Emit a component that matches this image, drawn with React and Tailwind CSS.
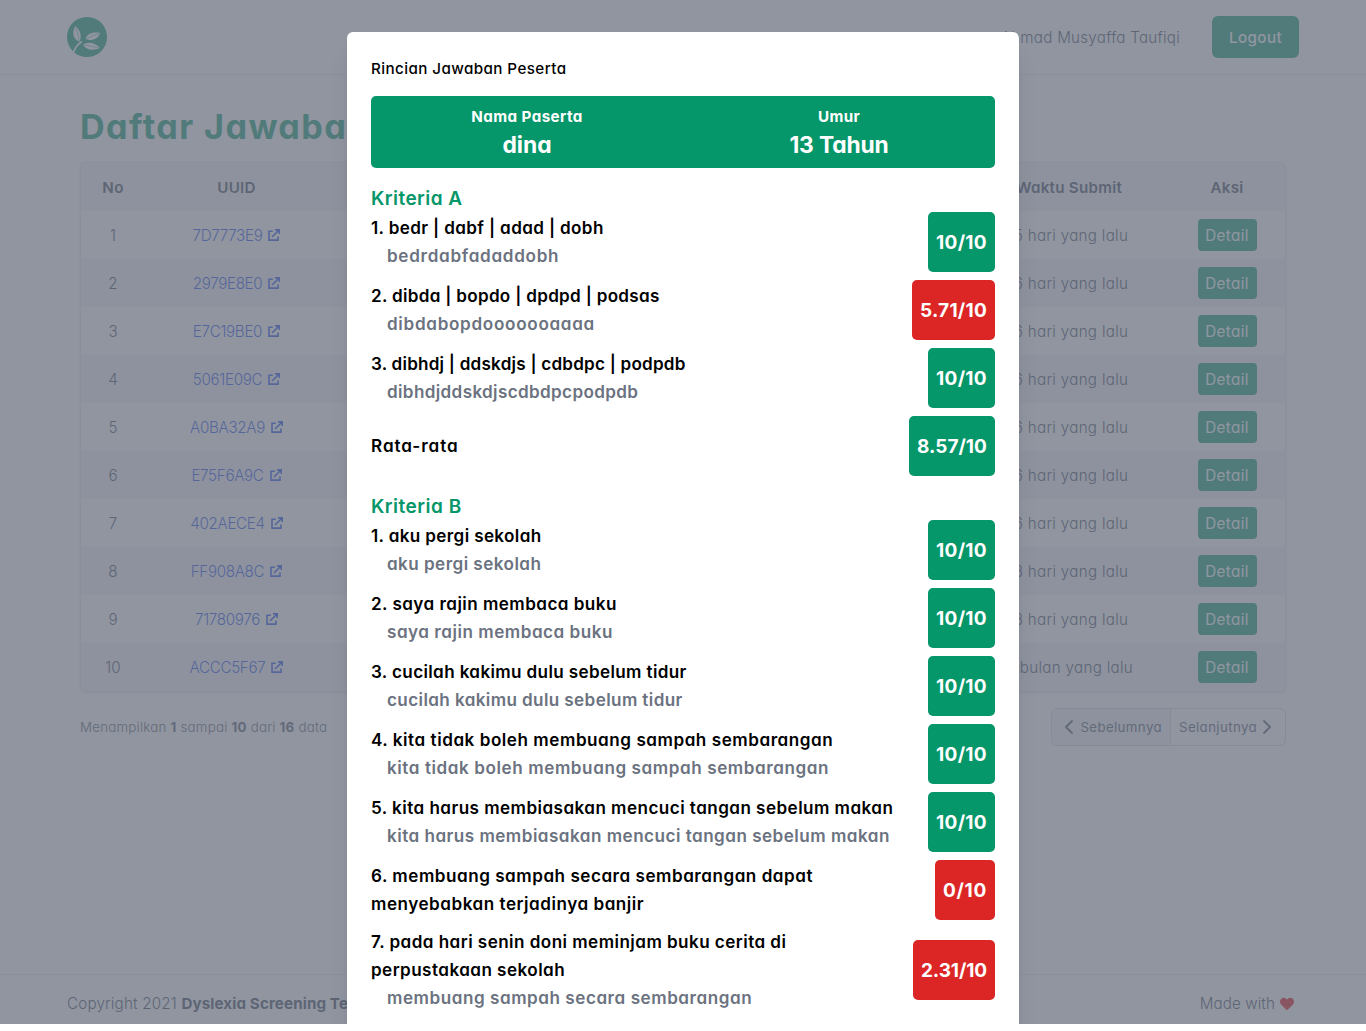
import React from "react";
import { FaHeart } from "react-icons/fa";

const rows = [
  ["7D7773E9", "5 hari yang lalu"],
  ["2979E8E0", "6 hari yang lalu"],
  ["E7C19BE0", "6 hari yang lalu"],
  ["5061E09C", "6 hari yang lalu"],
  ["A0BA32A9", "6 hari yang lalu"],
  ["E75F6A9C", "6 hari yang lalu"],
  ["402AECE4", "6 hari yang lalu"],
  ["FF908A8C", "8 hari yang lalu"],
  ["71780976", "8 hari yang lalu"],
  ["ACCC5F67", "1 bulan yang lalu"],
];

const tight = "tracking-[0.22px]";
const snug = "tracking-[0.36px]";
const normal = "tracking-[0.45px]";
const wide = "tracking-[0.52px]";
const wider = "tracking-[0.7px]";

const criteriaA = [
  ["bedr | dabf | adad | dobh", "bedrdabfadaddobh", "10", true, "tracking-[0.36px]", wider],
  ["dibda | bopdo | dpdpd | podsas", "dibdabopdooooooaaaa", "5.71", false, "tracking-[0.3px]", wider],
  ["dibhdj | ddskdjs | cdbdpc | podpdb", "dibhdjddskdjscdbdpcpodpdb", "10", true, tight, snug],
];

const criteriaB = [
  ["aku pergi sekolah", "aku pergi sekolah", "10", true, snug, normal],
  ["saya rajin membaca buku", "saya rajin membaca buku", "10", true, normal, wide],
  ["cucilah kakimu dulu sebelum tidur", "cucilah kakimu dulu sebelum tidur", "10", true, snug, "tracking-[0.39px]"],
  ["kita tidak boleh membuang sampah sembarangan", "kita tidak boleh membuang sampah sembarangan", "10", true, "tracking-[0.54px]", "tracking-[0.58px]"],
  ["kita harus membiasakan mencuci tangan sebelum makan", "kita harus membiasakan mencuci tangan sebelum makan", "10", true, normal, "tracking-[0.48px]"],
  ["membuang sampah secara sembarangan dapat menyebabkan terjadinya banjir", "", "0", false, wide, normal],
  ["pada hari senin doni meminjam buku cerita di perpustakaan sekolah", "membuang sampah secara sembarangan", "2.31", false, normal, "tracking-[0.54px]"],
];

const scoreSizes = {
  "10": "w-[67px] tracking-[0.29px]",
  "0": "w-[60px] tracking-[0.7px]",
  "5.71": "w-[83px] tracking-[0.26px]",
  "2.31": "w-[82px] tracking-[-0.1px]",
  "8.57": "w-[86px] tracking-[0px]",
};

function Logo() {
  return (
    <svg viewBox="0 0 40 40" className="size-10">
      <circle cx="20" cy="20" r="20" fill="#059669" />
      <g fill="#fff">
        <path d="M8.2 9C5 15.500 5.500 21.500 12.300 24.800C15.200 19.500 13.500 13 8.200 9Z" />
        <path d="M18.500 22C20 16.500 26 14.500 33.500 16C30.500 22 25 24.500 18.500 22Z" />
        <path d="M16 28C20 24.500 27 25 33 31C26.500 34 19 33 16 28Z" />
      </g>
      <path d="M6.500 35C8 31 11 27 15 24.500" fill="none" stroke="#fff" strokeWidth="1.700" />
      <path d="M8.700 10.500C10.500 15 11.500 19 12 24M19 22C23 20 27 18 33 16.300M17 28C22 28.500 27 30 32 31" fill="none" stroke="#059669" strokeWidth="0.500" />
    </svg>
  );
}

function ExternalLink() {
  return (
    <svg viewBox="0 0 12 12" className="size-3" fill="none" stroke="currentColor" strokeWidth="1.6">
      <path d="M4.8 2.2H1v8.900h9V7.400M4 8l6.800-6.800M7 .9h4.200v4.200" />
    </svg>
  );
}

function Chevron({ right }) {
  return (
    <svg viewBox="0 0 8 14" className="h-3.5 w-2" fill="none" stroke="currentColor" strokeWidth="1.8" strokeLinecap="round" strokeLinejoin="round">
      <path d={right ? "M1 1l6 6-6 6" : "M7 1L1 7l6 6"} />
    </svg>
  );
}

function Score({ value, pass }) {
  return (
    <div className={`h-[60px] shrink-0 rounded-[5px] pt-px text-center text-[19px] leading-[60px] font-bold text-white ${scoreSizes[value]} ${pass ? "bg-[#059669]" : "bg-[#dc2626]"}`}>
      {`${value}/10`}
    </div>
  );
}

function Answer({ number, item }) {
  const [question, answer, score, pass, questionTracking, answerTracking] = item;
  return (
    <div className="flex items-center justify-between text-[17.1px] leading-7 font-[590]">
      <div className="max-w-[530px]">
        <p className={`text-black ${questionTracking}`}>{`${number}. ${question}`}</p>
        {answer && <p className={`pl-4 text-[#6b7280] ${answerTracking}`}>{answer}</p>}
      </div>
      <Score value={score} pass={pass} />
    </div>
  );
}

function Modal() {
  return (
    <div className="absolute top-8 left-[347px] w-2xl rounded-md bg-white p-6 shadow-xl">
      <h3 className="h-6 pt-px text-[15.2px] leading-6 font-medium tracking-[0.41px] text-black">Rincian Jawaban Peserta</h3>
      <div className="mt-4 grid h-[72px] grid-cols-2 rounded-[5px] bg-[#059669] pt-[9px] text-center font-bold text-white">
        <div>
          <p className="text-[15.2px] leading-6 font-[650] tracking-[0.42px]">Nama Paserta</p>
          <p className="text-[22.8px] leading-8">dina</p>
        </div>
        <div>
          <p className="text-[15.2px] leading-6 font-[650] tracking-[0.38px]">Umur</p>
          <p className="text-[22.8px] leading-8 tracking-[-0.14px]">13 Tahun</p>
        </div>
      </div>
      <h4 className="mt-4 h-7 pt-px text-[19px] leading-7 font-[590] tracking-[0.45px] text-[#059669]">Kriteria A</h4>
      <div className="flex flex-col gap-2">
        {criteriaA.map((item, i) => <Answer key={i} number={i + 1} item={item} />)}
        <div className="flex items-center justify-between text-[17.1px] font-[590] tracking-[0.95px] text-black">
          <p>Rata-rata</p>
          <Score value="8.57" pass />
        </div>
      </div>
      <h4 className="mt-4 h-7 pt-px text-[19px] leading-7 font-[590] tracking-[0.5px] text-[#059669]">Kriteria B</h4>
      <div className="flex flex-col gap-2">
        {criteriaB.map((item, i) => <Answer key={i} number={i + 1} item={item} />)}
      </div>
    </div>
  );
}

export default function App() {
  return (
    <div className="relative flex h-[1024px] w-[1366px] flex-col overflow-hidden bg-white font-['Inter',sans-serif] text-[15.2px] leading-6 text-gray-700 [font-feature-settings:'cv11']">
      <header className="flex h-[75px] shrink-0 items-center justify-between border-b border-gray-200 px-[67px]">
        <Logo />
        <div className="flex items-center gap-8">
          <span className="pt-0.5 font-light tracking-[0.25px]">Ahmad Musyaffa Taufiqi</span>
          <button className="h-[42px] w-[87px] rounded-md bg-[#059669] pt-0.5 font-medium tracking-[0.38px] text-white">Logout</button>
        </div>
      </header>

      <main className="flex-1 px-20 pt-8">
        <h1 className="text-[34.2px] leading-10 font-[650] tracking-[1.4px] text-[#059669]">Daftar Jawaban Peserta</h1>
        <div className="mt-[15px] overflow-hidden rounded-[5px] border border-gray-200 text-center shadow-sm">
          <div className="grid h-12 grid-cols-[64px_183px_1fr_200px_116px] items-center bg-gray-100 pt-0.5 font-semibold tracking-[0.25px]">
            <span>No</span>
            <span>UUID</span>
            <span>Nama Peserta</span>
            <span>Waktu Submit</span>
            <span>Aksi</span>
          </div>
          {rows.map(([id, time], i) => (
            <div key={id} className={`grid h-12 grid-cols-[64px_183px_1fr_200px_116px] items-center ${i % 2 ? "bg-gray-100" : "bg-white"}`}>
              <span className="pt-0.5 font-[350]">{i + 1}</span>
              <a className="flex items-center justify-center gap-1.5 font-light tracking-[-0.34px] text-blue-700">
                <span className="pt-0.5">{id}</span>
                <ExternalLink />
              </a>
              <span />
              <span className="pt-0.5 pl-1 font-light tracking-[0.3px]">{time}</span>
              <span>
                <button className="h-8 w-[59px] rounded bg-[#059669] pt-0.5 align-middle tracking-[0.35px] text-white">Detail</button>
              </span>
            </div>
          ))}
        </div>
        <div className="mt-4 flex items-center justify-between text-[13.3px] text-gray-600">
          <p className="font-light tracking-[0.24px]">
            Menampilkan <b className="font-bold">1</b> sampai <b className="font-bold">10</b> dari <b className="font-bold">16</b> data
          </p>
          <div className="flex h-[38px] w-[235px] overflow-hidden rounded-md border border-gray-300 tracking-[0.37px]">
            <span className="flex w-[119px] items-center justify-end gap-[7px] border-r border-gray-300 bg-gray-100 pr-2"><Chevron />Sebelumnya</span>
            <span className="flex items-center gap-[6px] pl-2">Selanjutnya<Chevron right /></span>
          </div>
        </div>
      </main>

      <footer className="flex h-[50px] shrink-0 items-center justify-between border-t border-gray-200 pt-2 pr-[72px] pl-[67px]">
        <p className="font-light tracking-[0.18px]">
          Copyright 2021 <b className="font-[650] tracking-[0.1px]">Dyslexia Screening Test</b>
        </p>
        <p className="flex items-center gap-[5px] font-light tracking-[0.1px]">Made with <FaHeart className="size-3.5 text-red-600" /></p>
      </footer>

      <div className="absolute inset-0 bg-[#6b7280]/75" />
      <Modal />
    </div>
  );
}
